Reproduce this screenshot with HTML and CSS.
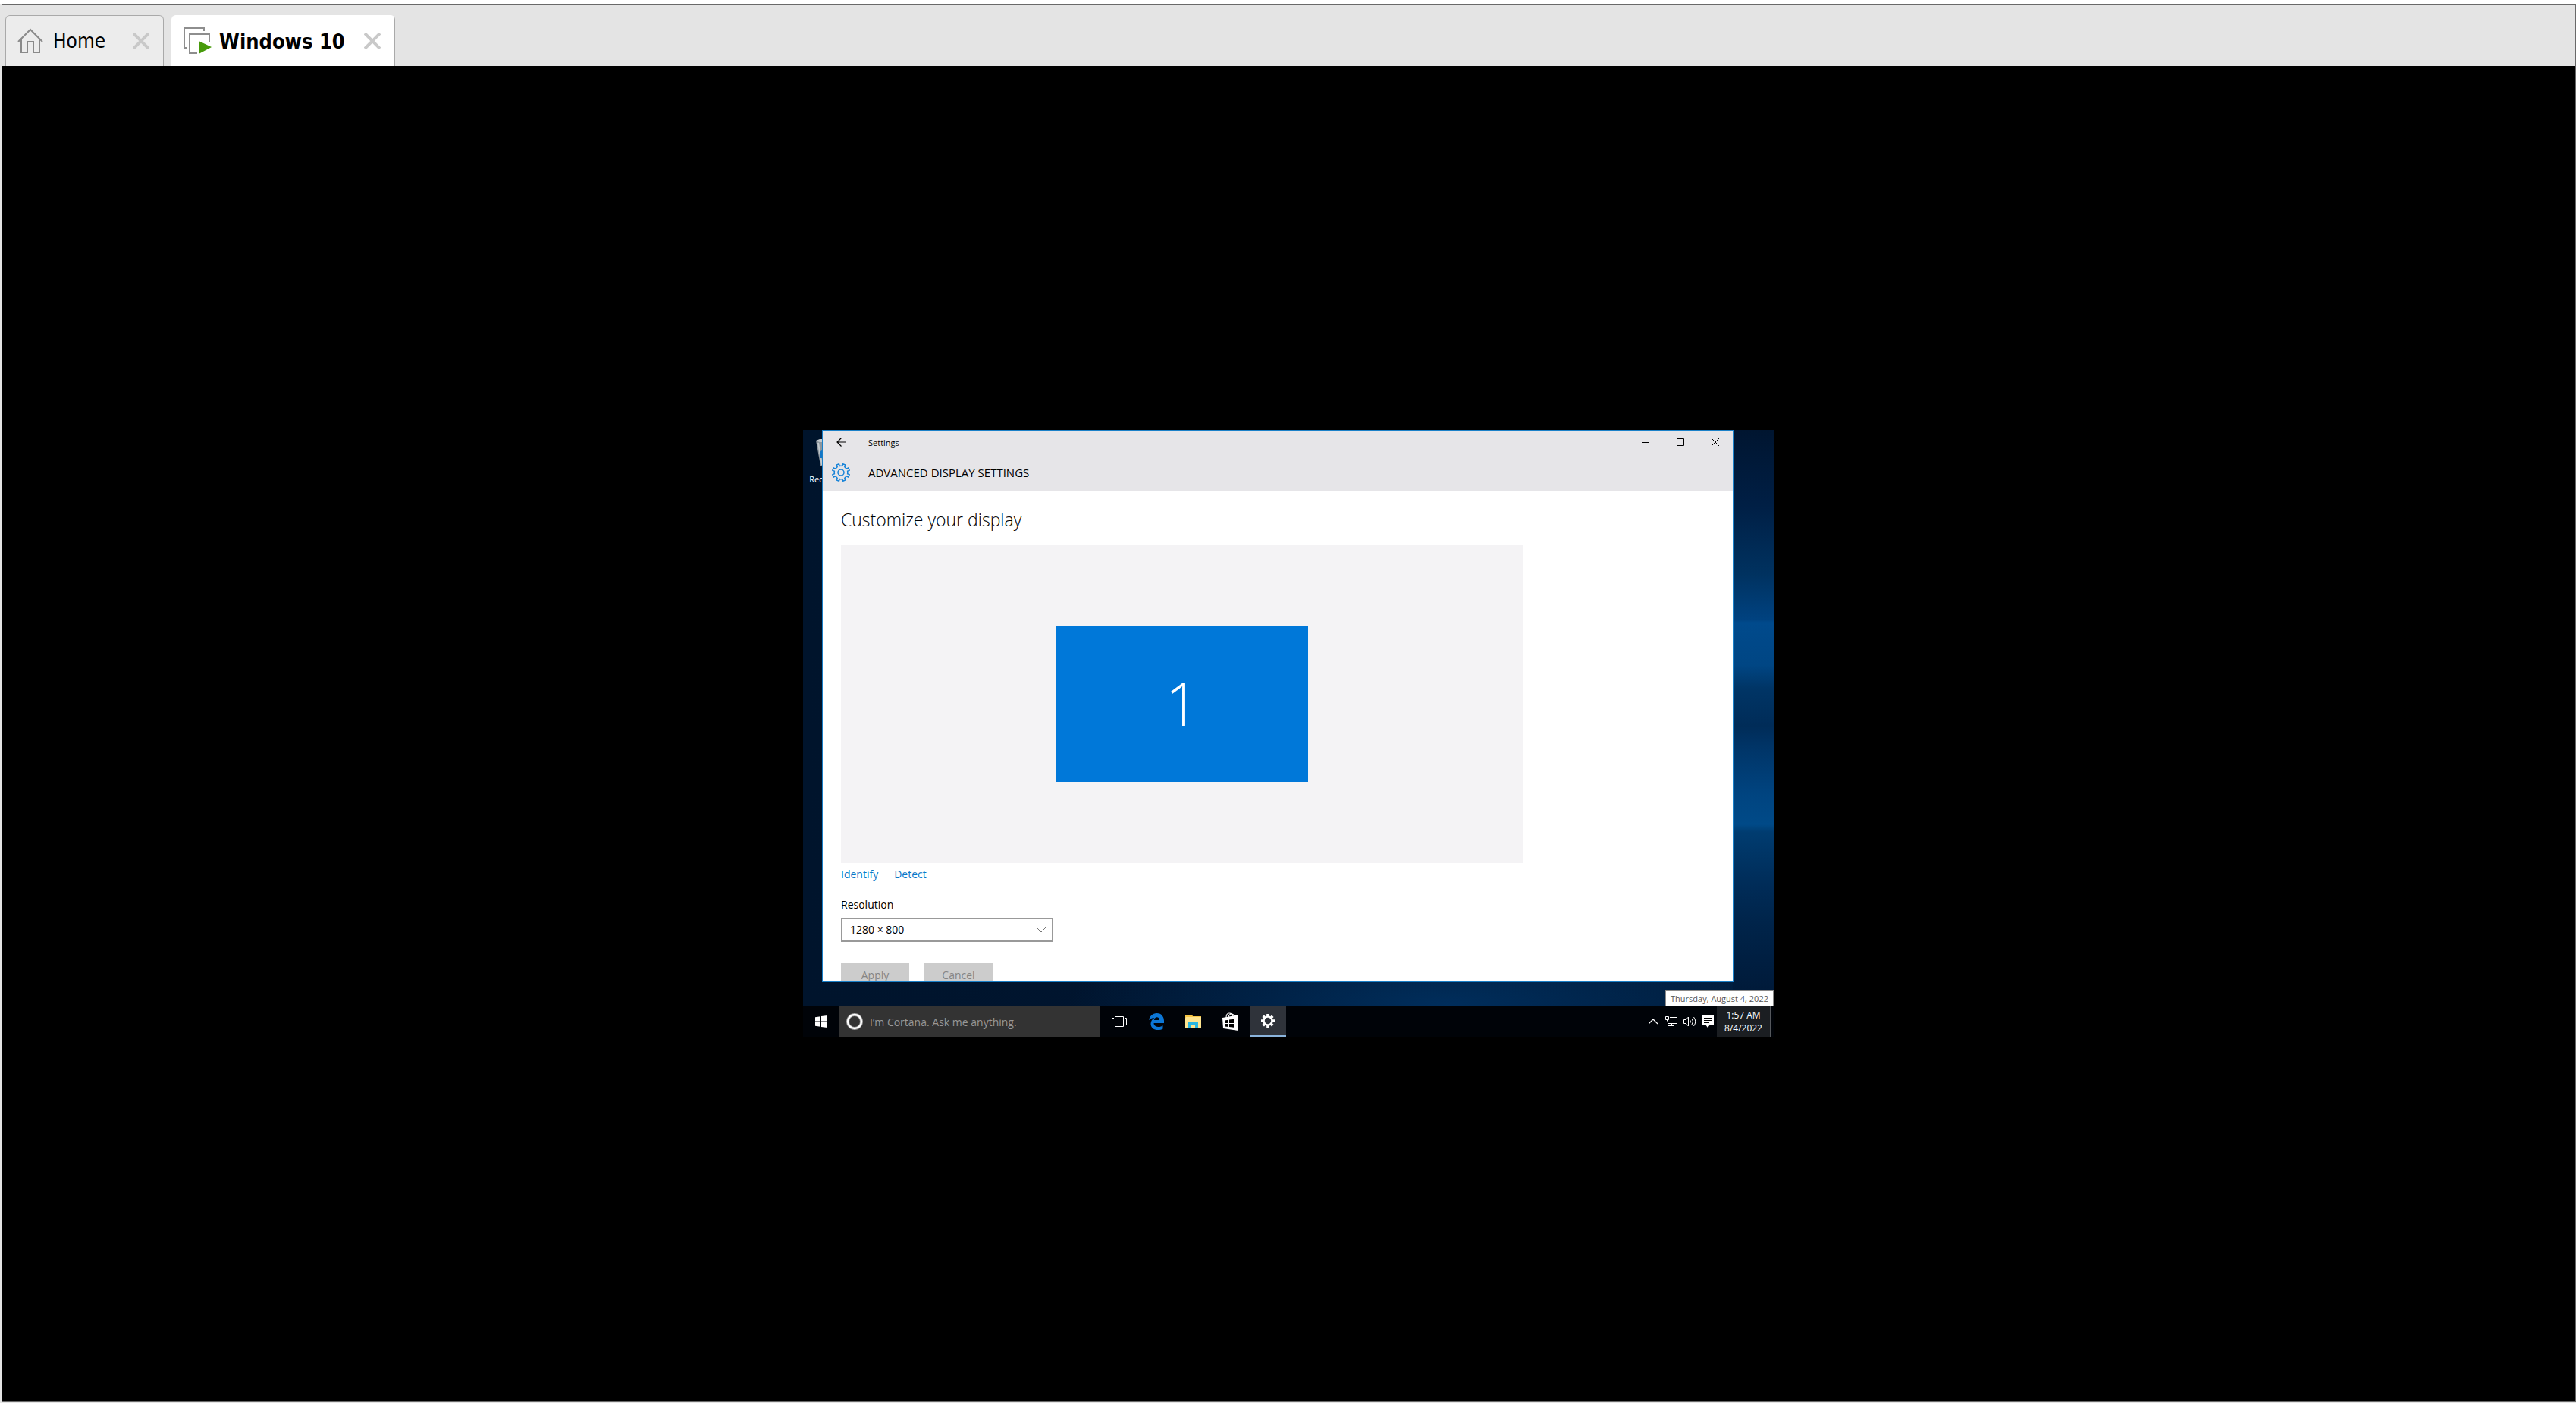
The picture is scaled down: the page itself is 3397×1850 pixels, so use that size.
FILE: index.html
```
<!DOCTYPE html>
<html lang="en">
<head>
<meta charset="utf-8">
<title>Windows 10 - Virtual machine</title>
<link rel="stylesheet" href="styles.css">
</head>
<body>
<div class="frame">
  <nav class="tabs" aria-label="Open tabs">
    <div class="tab">
      <svg class="tab-icon" width="34" height="34" viewBox="0 0 34 34" fill="none" stroke="#8a8a8a" stroke-width="2"><path d="M1 18 17 2l16 16M5 15v17h8V18h8v14h8V15"/></svg>
      <a class="tab-name" href="#home">Home</a>
      <button class="tab-close" aria-label="Close Home"><svg width="22" height="22" viewBox="0 0 22 22" stroke="#c9c9c9" stroke-width="4"><path d="M1 1l20 20M21 1 1 21"/></svg></button>
    </div>
    <div class="tab tab-active">
      <svg class="tab-icon" width="37" height="36" viewBox="0 0 37 36" fill="none" stroke="#8e8e8e" stroke-width="2"><path d="M27 5V1H1v26h4" /><path d="M34 19V9H8v25h10"/><path d="M20 18v17l17-9z" fill="#479a0b" stroke="none"/></svg>
      <a class="tab-name" href="#windows-10">Windows 10</a>
      <button class="tab-close" aria-label="Close Windows 10"><svg width="22" height="22" viewBox="0 0 22 22" stroke="#c9c9c9" stroke-width="4"><path d="M1 1l20 20M21 1 1 21"/></svg></button>
    </div>
  </nav>
  <main class="console">
    <div class="screen">
      <div class="desktop">
        <div class="recycle">
          <svg width="48" height="38" viewBox="4 0 48 38"><path d="M8 2l32-1-5 34H14z" fill="#8d969d"/><path d="M8 2l5-2h24l4 2-5 2H13z" fill="#c3c9cd"/><path d="M11 5l5 29" stroke="#c3c9cd" stroke-width="2"/><path d="M13 19q1-5 6-4v10h-5z" fill="#1476c6"/></svg>
          <span>Recycle Bin</span>
        </div>
        <section class="window">
          <header class="window-head">
            <div class="titlebar">
              <button class="icon-btn back" aria-label="Back"><svg width="12" height="12" viewBox="0 0 12 12" fill="none" stroke="#000" stroke-width="1.2"><path d="M12 6H1M6.500.5 1 6l5.500 5.500"/></svg></button>
              <span class="title">Settings</span>
              <button class="icon-btn" aria-label="Minimize"><svg width="10" height="10" viewBox="0 0 10 10" stroke="#000"><path d="M0 5.5h10"/></svg></button>
              <button class="icon-btn" aria-label="Maximize"><svg width="10" height="10" viewBox="0 0 10 10" fill="none" stroke="#000"><path d="M.5.5h9v9h-9z"/></svg></button>
              <button class="icon-btn" aria-label="Close"><svg width="10" height="10" viewBox="0 0 10 10" stroke="#000"><path d="M0 0l10 10M10 0 0 10"/></svg></button>
            </div>
            <div class="page-name">
              <svg class="gear" width="26" height="26" viewBox="-13 -13 26 26" fill="none" stroke="#1683d8" stroke-width="1.5" stroke-linejoin="round"><path d="M-2.6-11.2-1.8-8.6Q0-9 1.8-8.6L2.6-11.2 6.1-9.8 4.8-7.4 7.4-4.8 9.8-6.1 11.2-2.6 8.6-1.8Q9 0 8.6 1.8L11.2 2.6 9.8 6.1 7.4 4.8 4.8 7.4 6.1 9.8 2.6 11.2 1.8 8.6Q0 9-1.8 8.6L-2.6 11.2-6.1 9.8-4.8 7.4-7.4 4.8-9.8 6.1-11.2 2.6-8.6 1.8Q-9 0-8.6-1.8L-11.2-2.6-9.8-6.1-7.4-4.8-4.8-7.4-6.1-9.8z"/><circle r="4"/></svg>
              <h1>ADVANCED DISPLAY SETTINGS</h1>
            </div>
          </header>
          <div class="window-body">
            <h2>Customize your display</h2>
            <div class="arrangement"><div class="monitor">1</div></div>
            <div class="links"><a href="#identify">Identify</a><a href="#detect">Detect</a></div>
            <label for="resolution">Resolution</label>
            <div class="select">
              <select id="resolution"><option>1280 × 800</option></select>
              <svg width="12" height="8" viewBox="0 0 12 8" fill="none" stroke="#767676"><path d="M0 1l6 6 6-6"/></svg>
            </div>
            <div class="actions"><button disabled>Apply</button><button disabled>Cancel</button></div>
          </div>
        </section>
        <div class="tooltip" role="tooltip">Thursday, August 4, 2022</div>
      </div>
      <footer class="taskbar">
        <button class="task" aria-label="Start"><svg width="16" height="16" viewBox="0 0 16 16" fill="#fff"><path d="M0 2.3 7 1.3v6.2H0zM8 1.1 16 0v7.5H8zM0 8.5h7v6.2l-7-1zM8 8.5h8V16l-8-1.1z"/></svg></button>
        <label class="search">
          <svg width="22" height="22" viewBox="0 0 22 22" fill="none"><circle cx="11" cy="11" r="9" stroke="#999" stroke-width="4"/><circle cx="11" cy="11" r="9" stroke="#fff" stroke-width="2.4"/></svg>
          <input type="text" aria-label="Search" placeholder="I’m Cortana. Ask me anything.">
        </label>
        <div class="apps">
          <button class="task" aria-label="Task view"><svg width="20" height="14" viewBox="0 0 20 14" fill="none" stroke="#fff"><path d="M4.5.5h11v13h-11zM3 2.5H.5v9H3M17 2.5h2.5v9H17"/></svg></button>
          <button class="task" aria-label="Edge"><svg width="20" height="22" viewBox="0 0 20 22"><path fill="#0c77d6" d="M0 9C1 4 5 0 10.500 0 17 0 20 5 20 10v3H6.500c0 3.500 3 5 6 5 2.500 0 4.500-.8 6-1.800v4.300C17 21.500 14.500 22 12 22 6 22 2.500 18.500 2.500 14c0-3.500 2-6.500 5-8C4 6 1.500 7.500 0 9zM7 9h7c0-2.500-1.300-3.800-3.400-3.800C8.500 5.200 7.200 7 7 9z"/></svg></button>
          <button class="task" aria-label="File Explorer"><svg width="22" height="20" viewBox="0 0 22 20"><path d="M0 1h9l1 2h11v16H0z" fill="#f6c545"/><path d="M1 4h20v15H0V6z" fill="#fde48f"/><path d="M4 19v-8q0-1 1-1h11q1 0 1 1v8h-4v-4H8v4z" fill="#28b6e0"/></svg></button>
          <button class="task" aria-label="Store"><svg width="22" height="24" viewBox="0 0 22 24"><path d="M5 7q0-6 4-6t5 4M8 6q1-4 4-4t4 4" fill="none" stroke="#fff" stroke-width="1.2"/><path d="M0 7 20 3.500 21 24 1 21z" fill="#fff"/><path d="M3 10.500 8 9.800v4.200H3zM9 9.600l6-.8V14H9zM3 15h5v4l-5-.6zM9 15h6v4.800L9 19.100z" fill="#000"/></svg></button>
          <button class="task task-active" aria-label="Settings"><svg width="20" height="20" viewBox="-10 -10 20 20" fill="none" stroke="#fff"><circle r="5.5" stroke-width="2.6"/><path stroke-width="3.6" d="M0-6v-3M0 6v3M-6 0h-3M6 0h3M-4.300-4.300l-2-2M4.300 4.300l2 2M4.300-4.300l2-2M-4.300 4.300l-2 2"/></svg></button>
        </div>
        <div class="tray">
          <button aria-label="Show hidden icons"><svg width="12" height="8" viewBox="0 0 12 8" fill="none" stroke="#fff" stroke-width="1.3"><path d="M0 7l6-6 6 6"/></svg></button>
          <button aria-label="Network"><svg width="16" height="14" viewBox="0 0 16 14" fill="none" stroke="#fff"><path d="M6 1.500h9.500v8H3.500V6M.5.500h4v4h-4zM2.500 4.500v2M8.500 9.500v3M4 12.500h8"/></svg></button>
          <button aria-label="Volume"><svg width="17" height="14" viewBox="0 0 17 14" fill="none" stroke="#fff"><path d="M.5 4.500H3L6.500 1v12L3 9.500H.5zM8.500 4.500q2 2.500 0 5M11 3q3 4 0 8M13.500 1q4.500 6 0 12"/></svg></button>
          <button aria-label="Notifications"><svg width="16" height="16" viewBox="0 0 16 16"><path d="M0 0h16v12h-5l-3 4-3-4H0z" fill="#fff"/><path d="M3 3.500h10M3 6.500h10M3 9.500h7" stroke="#000"/></svg></button>
          <button class="clock"><span>1:57 AM</span><span>8/4/2022</span></button>
        </div>
      </footer>
    </div>
  </main>
</div>
</body>
</html>
```
FILE: styles.css
```
* { box-sizing: border-box; }
html, body { height: 100%; }
body { margin: 0; padding: 5px 0 1px 2px; background: linear-gradient(#fff 5px, #e4e4e4 5px); font-family: "Open Sans", "Noto Sans", sans-serif; }
button, input, select { font: inherit; color: inherit; border: 0; padding: 0; background: none; }
a { text-decoration: none; color: inherit; }
svg { display: block; flex: none; }

.frame { height: 100%; display: flex; flex-direction: column; border: 1px solid #696969; background: #e4e4e4; }
.tabs { height: 81px; flex: none; display: flex; align-items: flex-end; gap: 10px; padding-left: 4px; font-family: "DejaVu Sans Condensed", "DejaVu Sans", sans-serif; font-stretch: condensed; font-size: 26px; color: #000; }
.tab { height: 67px; display: flex; align-items: center; padding: 0 18px 0 15px; border: 1px solid #a9a9a9; border-bottom: 0; border-radius: 6px 6px 0 0; background: #ececec; }
.tab-active { background: #fff; border-color: #fff #a9a9a9 #fff #fff; font-size: 27px; font-weight: bold; }
.tab-name { margin: 0 36px 0 13px; white-space: nowrap; }
.tab-active .tab-name { margin: 0 25px 0 10px; }

.console { flex: 1; min-height: 0; display: flex; align-items: center; justify-content: center; padding: 0 1px 1px 0; background: #000; }
.screen { width: 1280px; height: 800px; display: flex; flex-direction: column; }
.desktop { flex: 1; position: relative; overflow: hidden; background:
  linear-gradient(#001530, #001f45 100px, #003260 190px, #004280 250px, #004a8c 254px, #004684 310px, #003566 340px, #002c58 390px, #003568 420px, #004480 480px, #004a88 520px, #003c70 530px, #002c58 600px, #00244a 650px, #001836 760px) right / 54px 100% no-repeat,
  radial-gradient(ellipse 500px 120px at 850px 760px, #002e5c 0%, #002e5c00 100%),
  linear-gradient(90deg, #00142c, #001530 50%, #001a38); }
.recycle { position: absolute; left: 5px; top: 12px; width: 64px; display: flex; flex-direction: column; align-items: center; gap: 7px; font-size: 11px; color: #fff; white-space: nowrap; }

.window { position: absolute; left: 25px; top: 0; width: 1202px; height: 728px; display: flex; flex-direction: column; overflow: hidden; border: 1px solid #1a80c8; background: #fff; color: #000; }
.window-head { height: 79px; flex: none; background: #e6e5e8; }
.titlebar { height: 30px; display: flex; align-items: center; font-size: 11px; }
.icon-btn { width: 46px; height: 30px; display: grid; place-items: center; }
.back { width: 48px; }
.title { flex: 1; padding-left: 12px; }
.page-name { height: 49px; display: flex; align-items: center; padding-left: 11px; }
.page-name h1 { margin: 0 0 0 23px; font-size: 15px; font-weight: 500; }
.window-body { padding: 22px 24px; font-size: 14px; line-height: 20px; }
.window-body h2 { margin: 0 0 17px; font-size: 23px; line-height: 32px; font-weight: 300; }
.arrangement { width: 900px; height: 420px; display: grid; place-items: center; background: #f4f3f5; }
.monitor { width: 332px; height: 206px; display: grid; place-items: center; padding-bottom: 4px; background: #0078d9; color: #fff; font-size: 80px; line-height: 100px; font-weight: 300; }
.links { display: flex; gap: 21px; margin: 5px 0 20px; color: #0a77c8; }
.window-body label { display: block; }
.select { width: 280px; margin-top: 7px; display: flex; align-items: center; position: relative; }
.select select { appearance: none; width: 100%; height: 32px; padding: 0 10px; border: 2px solid #999; background: #fff; }
.select svg { position: absolute; right: 10px; pointer-events: none; }
.actions { display: flex; gap: 20px; margin-top: 28px; }
.actions button { width: 90px; height: 32px; background: #ccc; color: #848484; }

.tooltip { position: absolute; right: 0; bottom: 0; height: 21px; padding: 0 6px; border: 1px solid #888; background: #fff; color: #575757; font-size: 11px; line-height: 19px; white-space: nowrap; }

.taskbar { height: 40px; flex: none; display: flex; background: #000308; color: #fff; }
.task { width: 48px; height: 40px; display: grid; place-items: center; }
.task-active { background: #2f333a; border-bottom: 2px solid #8ab4dc; }
.search { width: 344px; display: flex; align-items: center; gap: 9px; padding-left: 9px; background: #333; font-size: 14px; }
.search input { flex: 1; min-width: 0; outline: 0; }
.search input::placeholder { color: #979797; opacity: 1; }
.apps { flex: 1; display: flex; gap: 1px; padding-left: 1px; }
.tray { display: flex; padding-right: 4px; }
.tray button { width: 24px; display: grid; place-items: center; }
.tray .clock { width: 71px; align-content: center; background: #1b1e22; border-right: 1px solid #55585c; font-size: 12px; line-height: 17px; }
```
